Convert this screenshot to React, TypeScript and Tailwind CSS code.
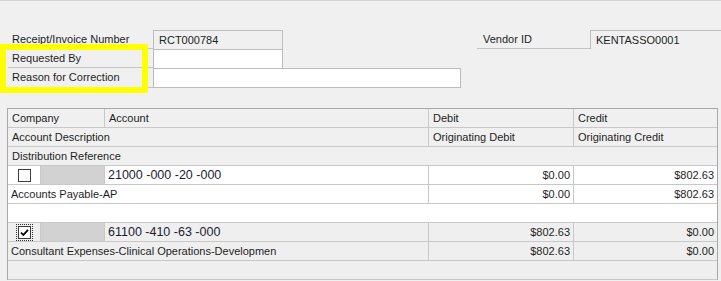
import React from 'react';

type Line = {
  account: string;
  description: string;
  debit: string;
  credit: string;
  checked: boolean;
};

const lines: Line[] = [
  { account: '21000 -000 -20 -000', description: 'Accounts Payable-AP', debit: '$0.00', credit: '$802.63', checked: false },
  { account: '61100 -410 -63 -000', description: 'Consultant Expenses-Clinical Operations-Developmen', debit: '$802.63', credit: '$0.00', checked: true },
];

const Check: React.FC<{ checked: boolean }> = ({ checked }) => (
  <div className={checked ? 'p-px outline outline-1 outline-dotted outline-[#333]' : ''}>
    <div className="w-[13px] h-[13px] border border-[#3c3c3c] bg-white flex items-center justify-center">
      {checked && (
        <svg width="9" height="9" viewBox="0 0 9 9">
          <path d="M1 4.5 L3.3 7 L8 1.8" stroke="#000" strokeWidth="1.8" fill="none" />
        </svg>
      )}
    </div>
  </div>
);

const App: React.FC = () => {
  return (
    <div className="w-[721px] h-[281px] overflow-hidden bg-[#f0f0f0] border-t border-[#d4d4d4] relative text-[11px] text-[#1e1e1e] font-['Liberation_Sans',Arial,sans-serif]">
      {/* header fields */}
      <div className="mt-[29px] flex flex-col">
        <div className="flex h-[19px]">
          <div className="ml-2 w-[145px] border-b border-[#c4c4c4] pl-1 flex items-center">Receipt/Invoice Number</div>
          <div className="w-[130px] border-l border-t border-r border-[#bcbcbc] pl-[5px] flex items-center">RCT000784</div>
          <div className="w-[194px]" />
          <div className="w-[113px] border-b border-[#c4c4c4] pl-[6px] flex items-center">Vendor ID</div>
          <div className="flex-1 border-l border-t border-[#bcbcbc] pl-[5px] flex items-center">KENTASSO0001</div>
        </div>
        <div className="flex h-[19px]">
          <div className="ml-2 w-[145px] border-b border-[#c4c4c4] pl-1 flex items-center">Requested By</div>
          <div className="w-[130px] border-l border-t border-r border-[#bcbcbc] bg-white" />
        </div>
        <div className="flex h-[20px]">
          <div className="ml-2 w-[145px] border-b border-[#c4c4c4] pl-1 flex items-center">Reason for Correction</div>
          <div className="w-[308px] border border-[#bcbcbc] bg-white" />
        </div>
      </div>

      {/* highlight annotation */}
      <div className="absolute left-0 top-[43px] w-[148px] h-[49px] border-[6px] border-[#ffff00] pointer-events-none" />

      {/* distribution grid */}
      <div className="mt-[20px] ml-[7px] w-[711px] border-l border-t border-r border-[#a8a8a8]">
        <div className="flex h-[19px] border-b border-[#c8c8c8]">
          <div className="w-[97px] border-r border-[#c8c8c8] pl-1 flex items-center">Company</div>
          <div className="w-[324px] border-r border-[#c8c8c8] pl-1 flex items-center">Account</div>
          <div className="w-[145px] border-r border-[#c8c8c8] pl-1 flex items-center">Debit</div>
          <div className="flex-1 pl-1 flex items-center">Credit</div>
        </div>
        <div className="flex h-[19px] border-b border-[#c8c8c8]">
          <div className="w-[421px] border-r border-[#c8c8c8] pl-1 flex items-center">Account Description</div>
          <div className="w-[145px] border-r border-[#c8c8c8] pl-1 flex items-center">Originating Debit</div>
          <div className="flex-1 pl-1 flex items-center">Originating Credit</div>
        </div>
        <div className="flex h-[19px] border-b border-[#c8c8c8]">
          <div className="flex-1 pl-1 flex items-center">Distribution Reference</div>
        </div>

        {lines.map((l, i) => (
          <div key={i} className={l.checked ? 'bg-[#efefef]' : 'bg-white'}>
            <div className="flex h-[19px] border-b border-[#c8c8c8]">
              <div className="w-[33px] border-r border-[#c8c8c8] flex items-center justify-center">
                <Check checked={l.checked} />
              </div>
              <div className="w-[64px] border-r border-[#c8c8c8] bg-[#d2d2d2]" />
              <div className="w-[324px] border-r border-[#c8c8c8] pl-[3px] flex items-center text-[12.5px] text-[#1c1c34]">{l.account}</div>
              <div className="w-[145px] border-r border-[#c8c8c8] pr-[3px] flex items-center justify-end">{l.debit}</div>
              <div className="flex-1 pr-[3px] flex items-center justify-end">{l.credit}</div>
            </div>
            <div className="flex h-[19px] border-b border-[#c8c8c8]">
              <div className="w-[421px] border-r border-[#c8c8c8] pl-[3px] flex items-center whitespace-nowrap">{l.description}</div>
              <div className="w-[145px] border-r border-[#c8c8c8] pr-[3px] flex items-center justify-end">{l.debit}</div>
              <div className="flex-1 pr-[3px] flex items-center justify-end">{l.credit}</div>
            </div>
            <div className="h-[19px] border-b border-[#c8c8c8]" />
          </div>
        ))}
      </div>
    </div>
  );
};

export default App;
